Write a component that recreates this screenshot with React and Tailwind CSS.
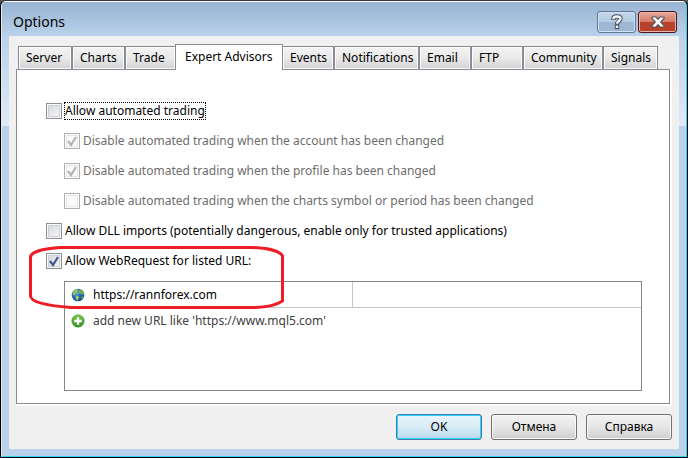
import { useState } from 'react'
import clsx from 'clsx'

const tabs = [
  { id: 'server', name: 'Server', width: 'w-[54px]' },
  { id: 'charts', name: 'Charts', width: 'w-[53px]' },
  { id: 'trade', name: 'Trade', width: 'w-[51px]' },
  { id: 'experts', name: 'Expert Advisors', width: 'w-[108px]' },
  { id: 'events', name: 'Events', width: 'w-[52px]' },
  { id: 'notifications', name: 'Notifications', width: 'w-[85px]' },
  { id: 'email', name: 'Email', width: 'w-[52px]' },
  { id: 'ftp', name: 'FTP', width: 'w-[52px]' },
  { id: 'community', name: 'Community', width: 'w-[80px]' },
  { id: 'signals', name: 'Signals', width: 'w-[55px]' }
]

const options = [
  { id: 'trading', label: 'Allow automated trading', focused: true },
  { id: 'account', label: 'Disable automated trading when the account has been changed', checked: true, disabled: true },
  { id: 'profile', label: 'Disable automated trading when the profile has been changed', checked: true, disabled: true },
  { id: 'symbol', label: 'Disable automated trading when the charts symbol or period has been changed', disabled: true },
  { id: 'dll', label: 'Allow DLL imports (potentially dangerous, enable only for trusted applications)' },
  { id: 'webrequest', label: 'Allow WebRequest for listed URL:', checked: true }
]

function HelpGlyph() {
  return (
    <svg width="12" height="16" viewBox="0 0 12 16" fill="none" aria-hidden="true">
      <path d="M2.500 6V4.500C2.500 3 4 2.500 6 2.500s3.500.6 3.500 2.300C9.500 7 6 7 6 10.500" stroke="#4a5363" strokeWidth="4.400" />
      <path d="M3.800 10.300h4.400v4.900H3.800z" fill="#4a5363" />
      <path d="M2.500 5.200V4.500C2.500 3 4 2.500 6 2.500s3.500.6 3.500 2.300C9.500 7 6 7 6 9.800" stroke="#f4f6f9" strokeWidth="2.400" />
      <path d="M4.800 11.600h2.400v2.400H4.800z" fill="#f4f6f9" />
    </svg>
  )
}

function CloseGlyph() {
  return (
    <svg width="14" height="12" viewBox="0 0 14 12" aria-hidden="true">
      <path
        d="M1 1h4l2 2.300L9 1h4v1.300L9.700 6 13 9.700V11H9L7 8.700 5 11H1V9.700L4.300 6 1 2.300z"
        fill="#fff"
        stroke="#53565f"
        strokeWidth="1.200"
        strokeLinejoin="round"
      />
    </svg>
  )
}

function GlobeIcon() {
  return (
    <svg width="14" height="14" viewBox="0 0 14 14" aria-hidden="true">
      <defs>
        <radialGradient id="sea" cx="0.4" cy="0.3" r="0.75">
          <stop offset="0" stopColor="#6fb2f2" />
          <stop offset="0.5" stopColor="#2268c4" />
          <stop offset="1" stopColor="#123f8e" />
        </radialGradient>
      </defs>
      <circle cx="7" cy="7" r="6.300" fill="url(#sea)" />
      <path d="M1.500 4.500C2.500 2.500 4.200 1.200 6.200 1l1 1.200L5.600 3.700l.6 1.200-2 1.200-.6 1.400-1.600-.6z" fill="#8fc44a" />
      <path d="M8.200 2.300l2.200-.5c1.400.8 2.300 2.200 2.700 3.800l-1 1.600-1.800-1.400-1.700.2-.8-1.600z" fill="#6fae3c" />
      <path d="M4.500 7.600l2.600.6 1.300 1.500-1.400 1.400-.5 1.700-1.500-1.600z" fill="#a5cf52" />
      <path d="M10.200 8.600l2.400-.6c-.3 1.500-1 2.700-2.200 3.600z" fill="#5f9f3a" />
    </svg>
  )
}

function AddIcon() {
  return (
    <svg width="14" height="14" viewBox="0 0 14 14" aria-hidden="true">
      <defs>
        <linearGradient id="leaf" x1="0" y1="0" x2="0" y2="1">
          <stop offset="0" stopColor="#7cc84e" />
          <stop offset="1" stopColor="#2f8f1e" />
        </linearGradient>
      </defs>
      <circle cx="7" cy="7" r="6.200" fill="url(#leaf)" stroke="#3f9a2a" strokeWidth="0.6" />
      <path d="M5.800 3.200h2.400v2.600h2.600v2.400H8.200v2.600H5.800V8.200H3.200V5.800h2.600z" fill="#fff" />
    </svg>
  )
}

function CheckRow({ option, checked, onChange }) {
  const { id, label, disabled, focused } = option
  return (
    <div className={clsx('flex h-[30px] items-center', disabled && 'pl-[18px]')}>
      <span className="relative size-4 shrink-0">
        <input
          id={id}
          type="checkbox"
          checked={checked}
          disabled={disabled}
          onChange={onChange}
          className={clsx(
            'block size-4 appearance-none border outline-none',
            disabled
              ? 'border-[#b1b1b1] bg-[#fafafa] shadow-[inset_0_0_0_1px_#fcfcfc,inset_0_0_0_2px_#e6e6e6]'
              : 'border-[#8e8f8f] bg-linear-to-br from-[#d0d4da] to-[#fafafa] shadow-[inset_0_0_0_1px_#f8f8f8,inset_0_0_0_2px_#cdd0d5]'
          )}
        />
        {checked && (
          <svg className="pointer-events-none absolute inset-0" width="16" height="16" viewBox="0 0 16 16" fill="none" aria-hidden="true">
            <path d="M4 8l3 4 5-8" stroke={disabled ? '#b4b4b4' : '#42598f'} strokeWidth="2.200" />
          </svg>
        )}
      </span>
      <label
        htmlFor={id}
        className={clsx(
          'ml-[2px] border border-dotted whitespace-nowrap leading-4',
          focused ? 'border-black' : 'border-transparent',
          disabled ? 'text-[#6d6d6d]' : 'text-black'
        )}
      >
        {label}
      </label>
    </div>
  )
}

function UrlList() {
  return (
    <div className="mt-[5px] h-[110px] border border-[#828790] bg-white">
      <table className="w-full table-fixed border-separate border-spacing-0">
        <tbody>
          <tr className="h-[26px] text-black">
            <td className="w-[288px] border-r border-b border-[#c4c4c4] p-0">
              <div className="flex items-center gap-2 pl-[6px]">
                <GlobeIcon />
                https://rannforex.com
              </div>
            </td>
            <td className="border-b border-[#c4c4c4] p-0" />
          </tr>
          <tr className="h-[26px] text-[#404040]">
            <td className="p-0" colSpan={2}>
              <div className="flex items-center gap-2 pl-[6px]">
                <AddIcon />
                add new URL like 'https://www.mql5.com'
              </div>
            </td>
          </tr>
        </tbody>
      </table>
    </div>
  )
}

function DialogButton({ children, primary }) {
  return (
    <button
      className={clsx(
        'h-[26px] w-[86px] rounded-[3px] border',
        primary
          ? 'border-[#3c7fb1] bg-linear-to-b from-[#e9f5fb] from-0% via-[#d8ecf6] via-50% to-[#b8d9eb] shadow-[inset_0_0_0_1px_#35d0f8]'
          : 'border-[#707070] bg-linear-to-b from-[#f2f2f2] from-0% via-[#e6e6e6] via-50% to-[#cfcfcf] shadow-[inset_0_0_0_1px_#f8f8f8]'
      )}
    >
      {children}
    </button>
  )
}

function App() {
  const [activeTab, setActiveTab] = useState('experts')
  const [values, setValues] = useState(() => Object.fromEntries(options.map((o) => [o.id, !!o.checked])))

  const toggle = (id) => setValues({ ...values, [id]: !values[id] })

  return (
    <div className="bg-[#5a5a5a] font-['Noto_Sans','Open_Sans',sans-serif] text-[12px] leading-4 text-black">
      <div className="rounded-t-md border border-black border-t-[#35343c] bg-black">
        <div className="rounded-t-[5px] border border-t-white border-r-[#2fd3ee] border-b-[#2fd3ee] border-l-[#e4edf7] bg-[#b9d1ea]">
          {/* title bar */}
          <header className="flex h-[34px] items-start justify-between rounded-t bg-linear-to-b from-[#98b3d2] to-[#b9d1ea] pr-[9px] pl-[11px]">
            <h1 className="pt-[10px] text-[14px] leading-5">Options</h1>
            <div className="flex gap-[2px] pt-[9px]">
              <button
                aria-label="Help"
                className="flex h-[22px] w-[39px] items-center justify-center rounded-[3px] border border-[#5f7896] bg-linear-to-b from-[#c3d6ea] from-0% via-[#b4cae2] via-49% to-[#9db7d4] to-51% shadow-[inset_0_0_0_1px_#d3e1f0]"
              >
                <HelpGlyph />
              </button>
              <button
                aria-label="Close"
                className="flex h-[22px] w-[39px] items-center justify-center rounded-[3px] border border-[#4a1420] bg-linear-to-b from-[#e6a99c] from-0% via-[#d5796b] via-49% to-[#b8412c] to-51% shadow-[inset_0_0_0_1px_#e8b5a9]"
              >
                <CloseGlyph />
              </button>
            </div>
          </header>

          <div className="bg-linear-to-b from-[#b9d1ea] to-[#dfeaf6] bg-[length:100%_90px] bg-no-repeat px-[7px] pb-[7px]">
            <main className="bg-[#f0f0f0] px-[7px] pt-2 pb-[9px]">
              <div role="tablist" className="ml-[2px] flex h-[25px] items-end">
                {tabs.map((tab) => (
                  <button
                    key={tab.id}
                    role="tab"
                    aria-selected={activeTab === tab.id}
                    onClick={() => setActiveTab(tab.id)}
                    className={clsx(
                      'shrink-0 border-x border-t border-[#898c95] text-left whitespace-nowrap',
                      tab.width,
                      activeTab === tab.id
                        ? 'z-10 -mx-px -mb-px h-[26px] bg-white pb-[2px] pl-[9px]'
                        : 'h-[23px] bg-linear-to-b from-[#f3f3f3] from-0% via-[#e9e9e9] via-50% to-[#d2d2d2] pl-[7px] shadow-[inset_0_0_0_1px_#fafafa]'
                    )}
                  >
                    {tab.name}
                  </button>
                ))}
              </div>

              <div className="border-r-2 border-b-2 border-white">
                <section role="tabpanel" className="relative border border-[#898c95] bg-white pt-[26px] pr-[27px] pb-3 pl-[29px]">
                  {options.map((option) => (
                    <CheckRow
                      key={option.id}
                      option={option}
                      checked={values[option.id]}
                      onChange={() => toggle(option.id)}
                    />
                  ))}
                  <div className="pl-[18px]">
                    <UrlList />
                  </div>

                  {/* hand-drawn highlight */}
                  <svg
                    className="pointer-events-none absolute top-[174px] left-[10px]"
                    width="262"
                    height="68"
                    viewBox="0 0 262 68"
                    fill="none"
                    aria-hidden="true"
                  >
                    <path
                      d="M34 3.500H224C240 4 253 7 255.500 12V57C251 60 244 63 228 63.500H44C20 62 4 58 3.500 52V13C4 8 16 4.500 34 3.500Z"
                      stroke="#ee1c24"
                      strokeWidth="3"
                    />
                  </svg>
                </section>
              </div>

              <div className="mt-2 flex justify-end gap-[9px]">
                <DialogButton primary>OK</DialogButton>
                <DialogButton>Отмена</DialogButton>
                <DialogButton>Справка</DialogButton>
              </div>
            </main>
          </div>
        </div>
      </div>
    </div>
  )
}

export default App
